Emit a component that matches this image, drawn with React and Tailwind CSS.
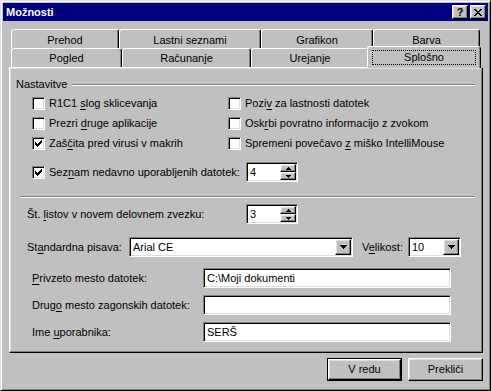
const raised =
  "border border-t-white border-l-white border-r-black border-b-black shadow-[inset_-1px_-1px_#808080,inset_1px_1px_#dfdfdf]";
const sunken =
  "border border-t-[#808080] border-l-[#808080] border-r-white border-b-white shadow-[inset_1px_1px_#000,inset_-1px_-1px_#dfdfdf]";

const CHECK = ["......#", ".....##", "#...###", "##.###.", "#####..", ".###...", "..#...."];
const CLOSE = ["##....##", ".##..##.", "..####..", "...##...", "..####..", ".##..##.", "##....##"];
const UP = ["..#..", ".###.", "#####"];
const DOWN = ["#####", ".###.", "..#.."];
const DROP = ["#######", ".#####.", "..###..", "...#..."];

const Pixels = ({ rows }) => (
  <svg width={rows[0].length} height={rows.length} shapeRendering="crispEdges" className="block">
    {rows.flatMap((r, y) =>
      [...r].map((c, x) =>
        c === "#" ? <rect key={`${x}-${y}`} x={x} y={y} width="1" height="1" fill="#000" /> : null
      )
    )}
  </svg>
);

const U = ({ children }) => <span className="underline underline-offset-[2px]">{children}</span>;

const Checkbox = ({ checked }) => (
  <div className={`w-[13px] h-[13px] shrink-0 bg-white ${sunken} flex items-center justify-center`}>
    {checked && <Pixels rows={CHECK} />}
  </div>
);

const CheckItem = ({ checked, children }) => (
  <div className="flex items-center gap-[4px] h-[20px]">
    <Checkbox checked={checked} />
    <span className="whitespace-nowrap">{children}</span>
  </div>
);

const Spinner = ({ value }) => (
  <div className={`w-[52px] h-[20px] bg-white ${sunken} flex p-[1px]`}>
    <div className="flex-1 pl-[2px] leading-[16px]">{value}</div>
    <div className="flex flex-col w-[16px]">
      <div className={`h-[8px] bg-[#c0c0c0] ${raised} flex items-center justify-center`}>
        <Pixels rows={UP} />
      </div>
      <div className={`h-[8px] bg-[#c0c0c0] ${raised} flex items-center justify-center`}>
        <Pixels rows={DOWN} />
      </div>
    </div>
  </div>
);

const Combo = ({ value, width }) => (
  <div className={`${width} h-[20px] bg-white ${sunken} flex p-[1px]`}>
    <div className="flex-1 pl-[2px] leading-[16px] whitespace-nowrap">{value}</div>
    <div className={`w-[16px] h-[16px] bg-[#c0c0c0] ${raised} flex items-center justify-center`}>
      <Pixels rows={DROP} />
    </div>
  </div>
);

const Field = ({ value }) => (
  <div className={`w-[248px] h-[20px] bg-white ${sunken} pl-[3px] leading-[16px] pt-[1px]`}>{value}</div>
);

const Tab = ({ label, width, pt }) => (
  <div
    className={`${width} h-full bg-[#c0c0c0] border-l border-t border-r border-l-white border-t-white border-r-black rounded-t-[3px] shadow-[inset_-1px_0_#808080] text-center ${pt}`}
  >
    {label}
  </div>
);

export default function App() {
  return (
    <div className="w-[491px] h-[391px] bg-[#c0c0c0] border border-t-[#dfdfdf] border-l-[#dfdfdf] border-r-black border-b-black shadow-[inset_1px_1px_#fff,inset_-1px_-1px_#808080] p-[2px] flex flex-col text-[11px] leading-[13px] text-black font-['Liberation_Sans',Arial,sans-serif]">
      {/* Title bar */}
      <div className="h-[18px] bg-[#000080] flex items-center pl-[3px] pr-[2px]">
        <span className="text-white font-bold">Možnosti</span>
        <div className="ml-auto flex gap-[2px]">
          <div className={`w-[16px] h-[14px] bg-[#c0c0c0] ${raised} flex items-center justify-center font-bold leading-[10px] text-[11px]`}>
            ?
          </div>
          <div className={`w-[16px] h-[14px] bg-[#c0c0c0] ${raised} flex items-center justify-center`}>
            <Pixels rows={CLOSE} />
          </div>
        </div>
      </div>

      {/* Tabs */}
      <div className="mt-[8px] ml-[8px] flex h-[19px]">
        <Tab label="Prehod" width="w-[108px]" pt="pt-[4px]" />
        <Tab label="Lastni seznami" width="w-[142px]" pt="pt-[4px]" />
        <Tab label="Grafikon" width="w-[112px]" pt="pt-[4px]" />
        <Tab label="Barva" width="w-[107px]" pt="pt-[4px]" />
      </div>
      <div className="ml-[8px] flex h-[19px] items-end">
        <Tab label="Pogled" width="w-[111px]" pt="pt-[3px]" />
        <Tab label="Računanje" width="w-[129px]" pt="pt-[3px]" />
        <Tab label="Urejanje" width="w-[118px]" pt="pt-[3px]" />
        <div className="relative z-10 -ml-[2px] -mb-[1px] w-[114px] h-[22px] bg-[#c0c0c0] border-l border-t border-r border-l-white border-t-white border-r-black rounded-t-[3px] shadow-[inset_-1px_0_#808080] pt-[3px] px-[4px]">
          <div className="h-[15px] border border-dotted border-black text-center">Splošno</div>
        </div>
      </div>

      {/* Panel */}
      <div className={`ml-[6px] w-[474px] h-[286px] ${raised} flex flex-col pt-[10px]`}>
        <div className="flex items-center h-[13px] pl-[6px] pr-[7px]">
          <span>Nastavitve</span>
          <div className="flex-1 ml-[5px] h-[2px] border-t border-t-[#808080] border-b border-b-white" />
        </div>

        <div className="mt-[2px] pl-[22px] grid grid-cols-[196px_1fr]">
          <CheckItem>
            R1C1 <U>s</U>log sklicevanja
          </CheckItem>
          <CheckItem>
            Pozi<U>v</U> za lastnosti datotek
          </CheckItem>
          <CheckItem>
            Prezri <U>d</U>ruge aplikacije
          </CheckItem>
          <CheckItem>
            Osk<U>r</U>bi povratno informacijo z zvokom
          </CheckItem>
          <CheckItem checked>
            Zaš<U>č</U>ita pred virusi v makrih
          </CheckItem>
          <CheckItem>
            Spremeni povečavo <U>z</U> miško IntelliMouse
          </CheckItem>
        </div>

        <div className="mt-[9px] h-[20px] pl-[22px] flex items-center">
          <div className="w-[214px]">
            <CheckItem checked>
              Sez<U>n</U>am nedavno uporabljenih datotek:
            </CheckItem>
          </div>
          <Spinner value="4" />
        </div>

        <div className="mt-[14px] ml-[10px] mr-[8px] h-[2px] border-t border-t-[#808080] border-b border-b-white" />

        <div className="mt-[6px] h-[20px] pl-[17px] flex items-center">
          <span className="w-[219px]">
            Št. <U>l</U>istov v novem delovnem zvezku:
          </span>
          <Spinner value="3" />
        </div>

        <div className="mt-[13px] h-[20px] pl-[17px] flex items-center">
          <span className="w-[102px] whitespace-nowrap">
            St<U>a</U>ndardna pisava:
          </span>
          <Combo value="Arial CE" width="w-[224px]" />
          <span className="ml-[9px] w-[46px]">
            V<U>e</U>likost:
          </span>
          <Combo value="10" width="w-[53px]" />
        </div>

        <div className="mt-[11px] h-[20px] pl-[22px] flex items-center">
          <span className="w-[171px]">
            <U>P</U>rivzeto mesto datotek:
          </span>
          <Field value="C:\Moji dokumenti" />
        </div>
        <div className="mt-[7px] h-[20px] pl-[22px] flex items-center">
          <span className="w-[171px]">
            Drug<U>o</U> mesto zagonskih datotek:
          </span>
          <Field value="" />
        </div>
        <div className="mt-[7px] h-[20px] pl-[22px] flex items-center">
          <span className="w-[171px]">
            Ime <U>u</U>porabnika:
          </span>
          <Field value="SERŠ" />
        </div>
      </div>

      {/* Buttons */}
      <div className="mt-[5px] mr-[5px] flex justify-end gap-[6px]">
        <div className="w-[75px] h-[23px] border border-black flex">
          <div className={`flex-1 ${raised} flex items-center justify-center`}>V redu</div>
        </div>
        <div className={`w-[75px] h-[23px] ${raised} flex items-center justify-center`}>Prekliči</div>
      </div>
    </div>
  );
}
